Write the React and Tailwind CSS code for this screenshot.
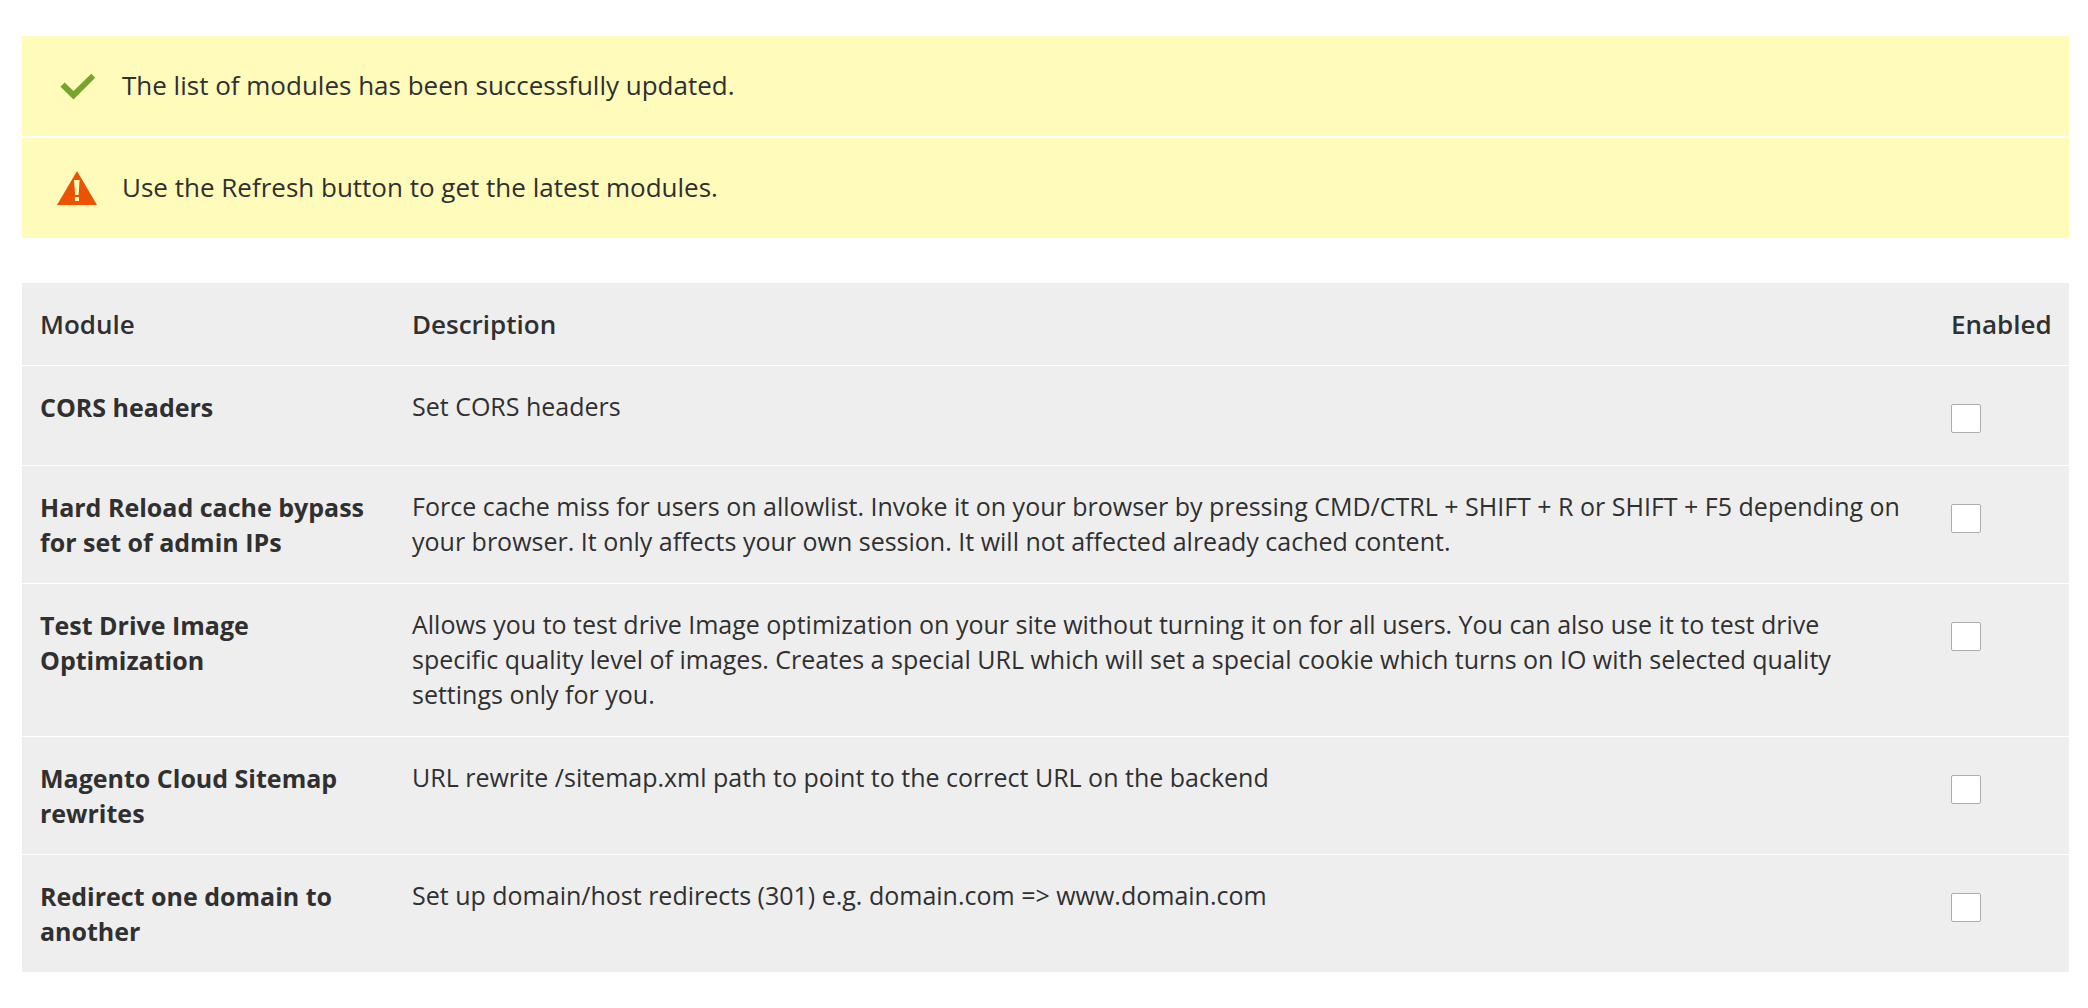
const modules = [
  ["CORS headers", "Set CORS headers"],
  ["Hard Reload cache bypass for set of admin IPs", "Force cache miss for users on allowlist. Invoke it on your browser by pressing CMD/CTRL + SHIFT + R or SHIFT + F5 depending on your browser. It only affects your own session. It will not affected already cached content."],
  ["Test Drive Image Optimization", "Allows you to test drive Image optimization on your site without turning it on for all users. You can also use it to test drive specific quality level of images. Creates a special URL which will set a special cookie which turns on IO with selected quality settings only for you."],
  ["Magento Cloud Sitemap rewrites", "URL rewrite /sitemap.xml path to point to the correct URL on the backend"],
  ["Redirect one domain to another", "Set up domain/host redirects (301) e.g. domain.com => www.domain.com"],
];

function Message({ icon, children }) {
  return (
    <div className="flex items-center bg-[#fffbbb] pl-[35px] text-[26px]">
      <span className="w-[65px] shrink-0">{icon}</span>
      <p className="pt-8 pb-[33px]">{children}</p>
    </div>
  );
}

export default function App() {
  return (
    <main className="bg-white pt-9 pr-[19px] pb-9 pl-[22px] font-['Open_Sans',sans-serif] text-[25px] leading-[35px] text-[#303030]">
      <section className="flex flex-col gap-[2px]">
        <Message
          icon={
            <svg viewBox="0 0 40 34" className="h-[34px] w-[40px]" aria-hidden="true">
              <path d="M3.5 17.7 L7.6 13.5 L16.5 22 L34.3 4.8 L38.2 8.8 L16.5 30.5 Z" fill="#79a22e" />
            </svg>
          }
        >
          The list of modules has been successfully updated.
        </Message>
        <Message
          icon={
            <svg viewBox="0 0 40 34" className="h-[34px] w-[40px]" aria-hidden="true">
              <path d="M20 0 L40 34 H0 Z" fill="#eb5202" />
              <path d="M17 9 H22.6 L21.6 24 H18.2 Z M17.9 26 H22 V30 H17.9 Z" fill="#fffbbb" />
            </svg>
          }
        >
          Use the Refresh button to get the latest modules.
        </Message>
      </section>
      <table className="mt-[45px] w-full table-fixed border-collapse bg-[#eeeeee] text-left">
        <colgroup>
          <col className="w-[372px]" />
          <col />
          <col className="w-[138px]" />
        </colgroup>
        <thead>
          <tr className="text-[26px]">
            <th className="pt-6 pb-[23px] pl-[18px] font-semibold">Module</th>
            <th className="pt-6 pb-[23px] pl-[18px] font-semibold">Description</th>
            <th className="pt-6 pb-[23px] pl-5 font-semibold">Enabled</th>
          </tr>
        </thead>
        <tbody>
          {modules.map(([name, text], i) => (
            <tr key={name} className="border-t border-white align-top">
              <th scope="row" className="pt-6 pb-[23px] pl-[18px] font-bold">
                <label htmlFor={`module-${i}`}>{name}</label>
              </th>
              <td className="pt-[23px] pr-6 pb-6 pl-[18px]">{text}</td>
              <td className="pt-[38px] pb-8 pl-5">
                <input
                  id={`module-${i}`}
                  type="checkbox"
                  className="block h-[29px] w-[30px] appearance-none rounded-[2px] border border-[#adadad] bg-white checked:bg-[#79a22e]"
                />
              </td>
            </tr>
          ))}
        </tbody>
      </table>
    </main>
  );
}
